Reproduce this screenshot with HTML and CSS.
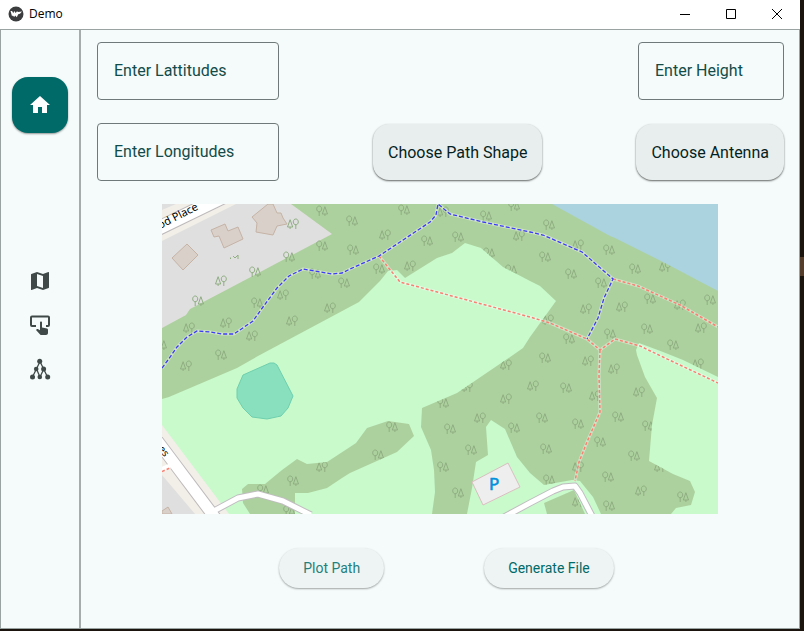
FILE: index.html
```html
<!DOCTYPE html>
<html lang="en">
<head>
<meta charset="utf-8">
<title>Demo</title>
<link rel="stylesheet" href="styles.css">
</head>
<body>
<div class="window">
  <header class="titlebar">
    <svg class="app-logo" viewBox="0 0 16 16" aria-hidden="true">
      <circle cx="8" cy="8" r="7.5" fill="#3b3d3f"/>
      <path d="M2.500 5h1.600l1.200 2.200L6.200 5l1.500 2L9 5.300l1 .7 4-.4-2 2.200-1.800.4-1.400 3-1.600-1.800-1 1.600-1.400-1.600-.8.800z" fill="#fff"/>
    </svg>
    <span class="app-name">Demo</span>
    <div class="window-controls">
      <button type="button" aria-label="Minimize"><svg viewBox="0 0 12 12"><path d="M1 6.500h10"/></svg></button>
      <button type="button" aria-label="Maximize"><svg viewBox="0 0 12 12"><path d="M1.500 1.500h9v9h-9z"/></svg></button>
      <button type="button" aria-label="Close"><svg viewBox="0 0 12 12"><path d="M1 1l10 10M11 1L1 11"/></svg></button>
    </div>
  </header>
  <div class="body">
    <nav class="rail" aria-label="Main">
      <button type="button" class="rail-home" aria-label="Home">
        <svg viewBox="0 0 24 24"><path d="M10 20v-6h4v6h5v-8h3L12 3 2 12h3v8z"/></svg>
      </button>
      <div class="rail-items">
        <button type="button" aria-label="Map"><svg viewBox="0 0 24 24"><path d="M15 19l-6-2.110V5l6 2.110M20.500 3h-.160L15 5.100 9 3 3.360 4.900c-.210.070-.360.250-.360.480V20.500a.5.5 0 0 0 .5.5l.160-.030L9 18.900l6 2.100 5.640-1.900c.210-.070.360-.250.360-.480V3.500a.5.5 0 0 0-.5-.5z"/></svg></button>
        <button type="button" aria-label="Select"><svg viewBox="0 0 24 24"><path d="M4 2.500h16a2 2 0 0 1 2 2v7.500a2 2 0 0 1-2 2h-2v-2h2V4.500H4V12h4v2H4a2 2 0 0 1-2-2V4.500a2 2 0 0 1 2-2zM13 8.500c.6 0 1 .4 1 1v5l5 1c.7.200 1 .6 1 1.300V20c0 1.200-1 2-2 2h-4.500c-.6 0-1-.2-1.400-.600L8 17l.7-.8c.3-.3.7-.3 1.100-.1l2.200 1.200V9.500c0-.6.4-1 1-1z"/></svg></button>
        <button type="button" aria-label="Graph"><svg viewBox="0 0 24 24"><g class="edges"><path d="M12 4.500L4.500 20M12 4.500l7.500 15.500M8.500 12l3.500 8M15.800 12L12 20"/></g><circle cx="11.700" cy="4.300" r="2.500"/><circle cx="8.200" cy="12" r="2.300"/><circle cx="15.600" cy="12" r="2.500"/><circle cx="4.500" cy="20" r="2.500"/><circle cx="11.800" cy="20" r="2.300"/><circle cx="19.700" cy="20" r="2.500"/></svg></button>
      </div>
    </nav>
    <main class="content">
      <div class="row">
        <input class="field" type="text" placeholder="Enter Lattitudes" aria-label="Enter Lattitudes">
        <input class="field field-small" type="text" placeholder="Enter Height" aria-label="Enter Height">
      </div>
      <div class="row">
        <input class="field" type="text" placeholder="Enter Longitudes" aria-label="Enter Longitudes">
        <button type="button" class="chooser">Choose Path Shape</button>
        <button type="button" class="chooser">Choose Antenna</button>
      </div>
      <div class="map">
        <svg viewBox="162 204 556 310" role="img" aria-label="Street map">
          <defs>
            <g id="a"><path d="M-2.800 0v5M2.900 3v2M-2.800-5c1.400 0 2.500 1.200 2.500 2.900S-1.400.8-2.800.8-5.300-.400-5.300-2.100-4.200-5-2.800-5zM2.900-4.300L.3 3h5.200z"/></g>
            <g id="b"><path d="M2.800 0v5M-2.900 3v2M2.800-5c1.400 0 2.500 1.200 2.500 2.900S4.200.8 2.800.8.3-.400.3-2.100 1.400-5 2.800-5zM-2.900-4.300L-5.500 3h5.200z"/></g>
            <path id="wood" d="M162 399L169 397 237 368 258 356 359 302 380 281 388 271 397 270 405 278 437 258 452 253 465 243 481 248 503 267 530 281 540 286 556 301 530 337 523 348 513 355 457 393 422 408 421 427 431 450 434 470 435 492 432 514H467L472 488 476 462 488 455 486 427 491 420 505 429 517 457 530 473 544 485 572 480 580 481 593 497 601 514H671L676 508 691 505 695 492 690 481 673 474 649 461 652 425 657 398 645 377 637 355 636 350 639 343 663 352 683 360 718 377V204H162zM350 447L327 462 307 464 297 459 282 470 265 484 248 484 242 489 243 503 250 514H295V493H308L327 488 342 478 350 473 397 452 414 436 409 424 388 421 367 428 356 443zM544 503L574 490 585 514H547z"/>
            <clipPath id="wood-clip"><use href="#wood"/></clipPath>
            <path id="blue" d="M162 368L168 360 177 347 187 337 197 331 210 332 222 334H234L253 321 263 307 277 288 289 276 303 269 315 271 332 274 342 273 350 269 379 256 430 222 436 215 438 204 450 214 483 222 530 232 543 235 582 252 613 279 604 298 598 318 587 339"/>
            <path id="red" d="M379 256L400 282 530 317 550 323 587 339 600 350 615 339 640 346 663 357 718 383M613 279L638 286 680 305 718 327M600 350L599 375 600 412 587 442 579 462 575 481"/>
            <path id="service" d="M210 513L238 498 258 494 283 501 311 515M504 517L530 503 553 491 563 487 575 486 580 493 592 516"/>
          </defs>
          <rect x="162" y="204" width="556" height="310" fill="#c8facc"/>
          <use href="#wood" fill="#add19e"/>
          <path d="M162 204H291L332 234 190 309 186 315 162 328z" fill="#e0dfdf"/>
          <path d="M162 204H236L162 241z" fill="#f2efe9"/>
          <path d="M155 230L225 196" stroke="#bdb9bb" stroke-width="15"/>
          <path d="M155 230L225 196" stroke="#fff" stroke-width="13"/>
          <path d="M162 210L176 204H162z" fill="#e0dfdf"/>
          <g class="building"><path d="M187 244L198 255 183 270 172 258zM211 230L225 224 228 231 238 227 243 239 224 248 219 236 214 237zM252 217L268 204H273L277 213 281 213 283 218 287 224 277 226 273 235 256 232 257 223z"/></g>
          <g class="trees" clip-path="url(#wood-clip)">
            <use href="#a" x="322" y="211"/><use href="#b" x="293" y="224"/><use href="#a" x="322" y="246"/><use href="#a" x="289" y="257"/><use href="#a" x="255" y="272"/><use href="#b" x="221" y="281"/><use href="#a" x="198" y="301"/><use href="#a" x="257" y="303"/><use href="#b" x="283" y="295"/><use href="#a" x="315" y="274"/><use href="#b" x="330" y="308"/><use href="#b" x="292" y="321"/><use href="#b" x="226" y="323"/><use href="#b" x="252" y="336"/><use href="#b" x="189" y="328"/><use href="#a" x="221" y="355"/><use href="#a" x="161" y="345"/><use href="#a" x="344" y="283"/>
            <path d="M230.500 259v-1.500M233 256l2 2 3-3v4"/>
            <use href="#a" x="404" y="210"/><use href="#a" x="352" y="221"/><use href="#b" x="385" y="235"/><use href="#a" x="353" y="250"/><use href="#a" x="427" y="241"/><use href="#a" x="458" y="237"/><use href="#a" x="486" y="216"/><use href="#b" x="443" y="212"/><use href="#a" x="514" y="206"/><use href="#b" x="519" y="236"/><use href="#a" x="379" y="269"/><use href="#b" x="410" y="266"/><use href="#a" x="489" y="253"/><use href="#a" x="511" y="270"/>
            <use href="#a" x="549" y="225"/><use href="#a" x="545" y="257"/><use href="#b" x="578" y="245"/><use href="#a" x="609" y="250"/><use href="#a" x="571" y="274"/><use href="#a" x="635" y="269"/><use href="#b" x="665" y="267"/><use href="#a" x="601" y="283"/><use href="#a" x="650" y="299"/><use href="#b" x="680" y="305"/><use href="#a" x="710" y="300"/><use href="#b" x="586" y="309"/><use href="#b" x="622" y="307"/><use href="#b" x="548" y="320"/><use href="#a" x="569" y="339"/><use href="#a" x="610" y="334"/><use href="#a" x="647" y="329"/><use href="#a" x="673" y="345"/><use href="#b" x="701" y="328"/><use href="#a" x="545" y="358"/><use href="#b" x="588" y="361"/>
            <use href="#b" x="186" y="366"/><use href="#b" x="322" y="467"/><use href="#a" x="293" y="481"/><use href="#a" x="263" y="490"/><use href="#a" x="289" y="511"/><use href="#a" x="392" y="427"/><use href="#a" x="378" y="455"/><use href="#b" x="506" y="365"/><use href="#b" x="467" y="387"/><use href="#b" x="506" y="399"/><use href="#a" x="443" y="403"/><use href="#a" x="450" y="429"/><use href="#b" x="480" y="418"/><use href="#a" x="514" y="428"/><use href="#a" x="471" y="450"/><use href="#a" x="443" y="467"/><use href="#a" x="458" y="493"/>
            <use href="#b" x="614" y="369"/><use href="#b" x="533" y="386"/><use href="#a" x="566" y="388"/><use href="#b" x="595" y="396"/><use href="#b" x="639" y="392"/><use href="#a" x="542" y="418"/><use href="#a" x="578" y="424"/><use href="#a" x="618" y="417"/><use href="#a" x="648" y="426"/><use href="#a" x="546" y="449"/><use href="#a" x="600" y="442"/><use href="#a" x="634" y="456"/><use href="#b" x="578" y="467"/><use href="#b" x="660" y="467"/><use href="#a" x="549" y="480"/><use href="#a" x="608" y="477"/><use href="#b" x="641" y="491"/><use href="#a" x="683" y="497"/><use href="#a" x="609" y="506"/><use href="#b" x="578" y="502"/><use href="#b" x="698" y="364"/>
          </g>
          <path d="M552 204H718V291L663 262 615 238 610 236z" fill="#aad3df"/>
          <path d="M270 363L274 363 277 365 293 396 288 408 281 416 267 419 252 417 243 408 237 398V389L243 375z" fill="#88e0be" stroke="#6fcfae"/>
          <path d="M162 425L229 514H162z" fill="#f2efe9"/>
          <path d="M162 475L195 514H162z" fill="#e0dfdf"/>
          <path class="building" d="M162 511L168 507 172 514H162z"/>
          <path d="M150 431L216 519" stroke="#bdb9bb" stroke-width="13"/>
          <use href="#service" class="service-case"/>
          <path d="M150 431L216 519" stroke="#fff" stroke-width="11"/>
          <use href="#service" class="service"/>
          <path d="M161 470l9-4" stroke="#fff" stroke-width="5"/>
          <path d="M162 471.500l8-3.500" stroke="#fa8072" stroke-width="1.500" stroke-dasharray="3 2"/>
          <path d="M472 482L508 463 520 487 483 505z" fill="#eee" stroke="#d9bfbf"/>
          <use href="#red" class="path-halo"/><use href="#blue" class="path-halo"/>
          <use href="#red" class="path-red"/><use href="#blue" class="path-blue"/>
          <text class="parking" x="489" y="490">P</text>
          <text class="street" transform="translate(160 229) rotate(-27)">od Place</text>
          <text class="street street-small" transform="translate(158 449) rotate(53)">es</text>
        </svg>
      </div>
      <div class="actions">
        <button type="button" class="plot">Plot Path</button>
        <button type="button">Generate File</button>
      </div>
    </main>
  </div>
</div>
</body>
</html>
```
FILE: styles.css
```css
* { box-sizing: border-box; }

body {
  margin: 0;
  min-height: 100vh;
  display: flex;
  padding: 0 4px 2px 0;
  background: linear-gradient(#1a130e 0 257px, #543d2a 257px 276px, #1a130e 276px);
  font-family: Roboto, "Liberation Sans", sans-serif;
}

button { border: 0; padding: 0; font: inherit; background: none; }

svg { display: block; }

.window { flex: 1; display: flex; flex-direction: column; background: #f4fbfa; }

.titlebar {
  display: flex;
  align-items: center;
  height: 29px;
  padding: 0 0 2px 8px;
  background: #fff;
}
.app-logo { width: 16px; height: 16px; }
.app-name { margin-left: 5px; font: 12px/16px "Open Sans", "Noto Sans", sans-serif; color: #000; }
.window-controls { display: flex; margin-left: auto; }
.window-controls button { width: 46px; height: 27px; display: grid; place-items: center; }
.window-controls svg { width: 12px; height: 12px; fill: none; stroke: #000; }

.body { flex: 1; display: flex; border: 1px solid #9aa3a2; }

.rail {
  width: 80px;
  padding: 47px 0 0 11px;
  border-right: 2px solid #a5acab;
}
.rail-home {
  display: grid;
  place-items: center;
  width: 56px;
  height: 56px;
  border-radius: 16px;
  background: #006a69;
  box-shadow: 0 1px 2px rgba(0, 0, 0, 0.4);
}
.rail svg { width: 24px; height: 24px; fill: #3f4948; }
.rail .rail-home svg { fill: #fff; }
.rail-items { display: flex; flex-direction: column; gap: 20px; width: 56px; margin-top: 136px; align-items: center; }
.edges { stroke: #3f4948; stroke-width: 1.3; }

.content { flex: 1; min-width: 0; padding: 12px 15px 0 16px; }

.row { display: flex; justify-content: space-between; align-items: center; margin-bottom: 23px; }

.field {
  width: 182px;
  height: 58px;
  padding: 0 16px 2px;
  border: 1px solid #6f7979;
  border-radius: 4px;
  background: transparent;
  font: 16px/20px Roboto, "Liberation Sans", sans-serif;
  color: #134b49;
}
.field-small { width: 146px; }
.field::placeholder { color: #134b49; opacity: 1; }

.chooser {
  height: 56px;
  padding: 0 15px;
  border-radius: 16px;
  background: #e8eeed;
  color: #051f1f;
  font-size: 16px;
  box-shadow: 0 1px 2px rgba(0, 0, 0, 0.6);
}

.map { padding: 0 66px 0 65px; }
.map svg { width: 100%; }
.building { fill: #d9d0c9; stroke: #c5b3a6; }
.trees { fill: none; stroke: #8fae82; stroke-width: 1; }
.service, .service-case { fill: none; stroke: #fff; stroke-width: 5; stroke-linejoin: round; }
.service-case { stroke: #c0bcc0; stroke-width: 7; }
.path-halo { fill: none; stroke: #fff; stroke-opacity: 0.4; stroke-width: 3; stroke-linejoin: round; }
.path-red { fill: none; stroke: #fa8072; stroke-width: 1.5; stroke-dasharray: 3 2; }
.path-blue { fill: none; stroke: #3b3bf5; stroke-width: 1.3; stroke-dasharray: 4 2; }
.parking { font: 17px "Noto Sans", sans-serif; fill: #0092da; stroke: #0092da; stroke-width: 0.6; }
.street { font: 11px "Noto Sans", sans-serif; fill: #000; }
.street-small { font-size: 10px; }

.actions { display: flex; justify-content: center; gap: 100px; padding-left: 12px; margin-top: 34px; }
.actions button {
  height: 40px;
  padding: 0 24px;
  border-radius: 20px;
  background: #eef4f3;
  color: #006a69;
  font-size: 14px;
  box-shadow: 0 1px 2px rgba(0, 0, 0, 0.35);
}
.actions .plot { color: #257f7c; }
```
